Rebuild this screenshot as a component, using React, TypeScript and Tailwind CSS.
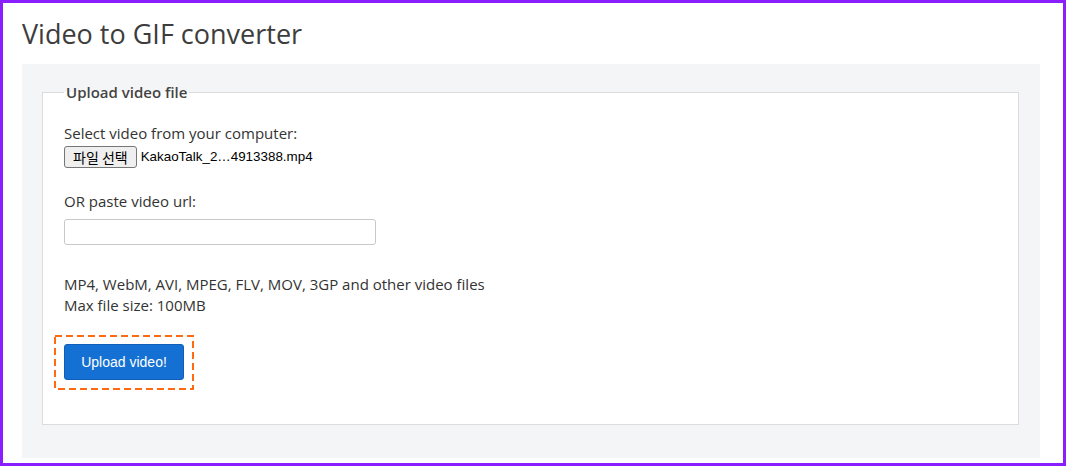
import React from 'react';

const sans = "font-['Open_Sans','Noto_Sans',sans-serif]";

export default function App() {
  return (
    <div className={`h-[466px] w-[1066px] border-[3px] border-[#8a1eff] bg-white text-[#333] ${sans}`}>
      <div className="pl-[19px] pr-[23px] pt-[14px]">
        <h1 className="text-[27px] leading-[34px] text-[#3d3d3d] mb-[13px]">Video to GIF converter</h1>

        <div className="bg-[#f4f5f7] h-[394px] px-[20px] pt-[17px]">
          <fieldset className="border border-[#dcdcdc] bg-white pl-[21px] pr-[21px] pb-[44px] mr-[1px]">
            <legend className="px-[2px] text-[15px] leading-[22px] font-semibold text-[#444]">
              Upload video file
            </legend>

            <div className="pt-[20px] text-[15px] leading-[21px]">
              <div>Select video from your computer:</div>
              <div className="flex items-center h-[23px] mt-[1px]">
                <button className="h-[22px] px-[8px] border border-[#767676] rounded-[3px] bg-[#efefef] text-black text-[14px] leading-none font-['Noto_Sans_CJK_KR','Noto_Sans',sans-serif]">
                  파일 선택
                </button>
                <span className="ml-[4px] text-[13.4px] text-black font-['Liberation_Sans','Arial',sans-serif]">
                  KakaoTalk_2…4913388.mp4
                </span>
              </div>

              <div className="mt-[23px]">OR paste video url:</div>
              <input
                type="text"
                className="block mt-[7px] w-[312px] h-[26px] border border-[#c8c8c8] rounded-[3px] bg-white outline-none"
              />

              <div className="mt-[29px]">MP4, WebM, AVI, MPEG, FLV, MOV, 3GP and other video files</div>
              <div>Max file size: 100MB</div>

              <div className="mt-[28px] relative inline-block align-top">
                <button className="block h-[36px] w-[120px] rounded-[3px] bg-[#1470d2] border border-[#0f5fb8] text-white text-[14px] font-['Liberation_Sans','Arial',sans-serif]">
                  Upload video!
                </button>
                <svg className="absolute left-[-10px] top-[-9px] pointer-events-none" width="140" height="55" viewBox="0 0 140 55">
                  <rect x="1" y="1" width="138" height="53" fill="none" stroke="#ff6a13" strokeWidth="2" strokeDasharray="7 4" />
                </svg>
              </div>
            </div>
          </fieldset>
        </div>
      </div>
    </div>
  );
}
